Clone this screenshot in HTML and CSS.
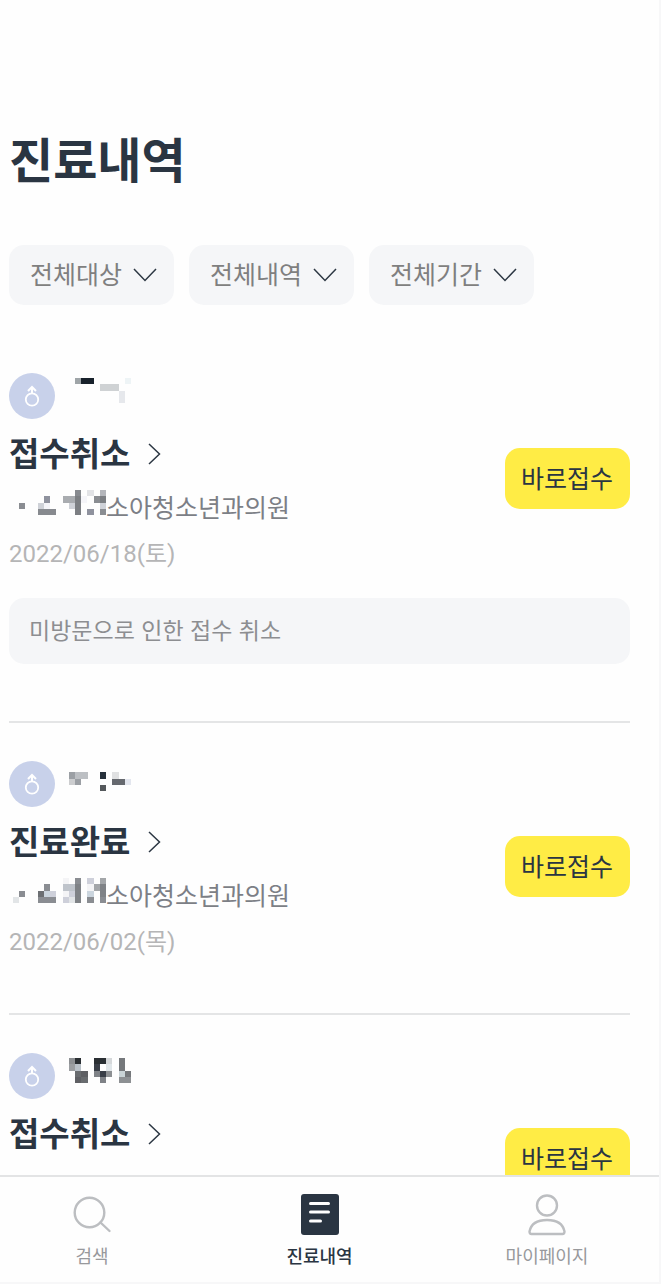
FILE: index.html
```html
<!DOCTYPE html>
<html lang="ko">
<head>
<meta charset="utf-8">
<meta name="viewport" content="width=device-width, initial-scale=1">
<title>진료내역</title>
<link rel="stylesheet" href="styles.css">
</head>
<body>
<svg class="symbols" aria-hidden="true">
  <symbol id="male" viewBox="0 0 46 46">
    <circle cx="23" cy="26.500" r="6.200" fill="none" stroke="#fff" stroke-width="1.8"/>
    <path d="M23 20.500V15M19 18L23 14l4 4" fill="none" stroke="#fff" stroke-width="2"/>
  </symbol>
  <symbol id="down" viewBox="0 0 24 14">
    <path d="M1 1l11 11.5L23 1" fill="none" stroke="#2c3743" stroke-width="1.5"/>
  </symbol>
  <symbol id="next" viewBox="0 0 13 22">
    <path d="M1 1l10.5 10L1 21" fill="none" stroke="#2c3743" stroke-width="1.5"/>
  </symbol>
</svg>
<div class="app">
  <main class="content">
    <h1 class="title">진료내역</h1>
    <div class="filters">
      <button class="chip" type="button">전체대상<svg class="chip-icon"><use href="#down"/></svg></button>
      <button class="chip" type="button">전체내역<svg class="chip-icon"><use href="#down"/></svg></button>
      <button class="chip" type="button">전체기간<svg class="chip-icon"><use href="#down"/></svg></button>
    </div>

    <article class="visit">
      <div class="visit-row">
        <div class="info">
          <div class="person">
            <svg class="avatar"><use href="#male"/></svg>
            <svg class="mask-name" viewBox="0 0 10 4" preserveAspectRatio="none" shape-rendering="crispEdges">
              <path fill="#9fa5a8" d="M1 0h1v1h-1z"/><path fill="#18212b" d="M2 0h2v1h-2z"/><path fill="#eef4f6" d="M9 0h1v1h-1z"/>
              <path fill="#cfd2d4" d="M5 1h3v1h-3z"/><path fill="#e6e8ec" d="M8 2h1v2h-1z"/>
            </svg>
          </div>
          <h2 class="status"><a class="status-link" href="#visit-1">접수취소<svg class="next-icon"><use href="#next"/></svg></a></h2>
          <p class="clinic">
            <svg class="mask-clinic" viewBox="0 0 15 4" preserveAspectRatio="none" shape-rendering="crispEdges">
              <path fill="#878a8f" d="M10 0h1v1h-1zM4 3h3v1h-3z"/><path fill="#e2e3e6" d="M12 0h1v1h-1z"/><path fill="#b4b6bb" d="M14 0h1v1h-1z"/>
              <path fill="#8f929e" d="M5 1h1v1h-1zM12 3h1v1h-1z"/><path fill="#a9acb0" d="M8 1h2v1h-2z"/><path fill="#7c7f83" d="M10 1h1v3h-1zM14 1h1v1h-1z"/>
              <path fill="#f5f5f9" d="M11 1h1v1h-1zM5 2h1v1h-1z"/><path fill="#8a8d92" d="M13 1h1v1h-1zM1 2h1v1h-1zM14 3h1v1h-1z"/><path fill="#cfd2d8" d="M4 2h1v1h-1zM9 2h1v1h-1zM14 2h1v1h-1z"/>
            </svg>소아청소년과의원</p>
          <p class="date"><time datetime="2022-06-18">2022/06/18(토)</time></p>
        </div>
        <button class="book" type="button">바로접수</button>
      </div>
      <p class="note">미방문으로 인한 접수 취소</p>
    </article>

    <article class="visit">
      <div class="visit-row">
        <div class="info">
          <div class="person">
            <svg class="avatar"><use href="#male"/></svg>
            <svg class="mask-name" viewBox="0 0 10 4" preserveAspectRatio="none" shape-rendering="crispEdges">
              <path fill="#9b9fa4" d="M0 1h1v1h-1zM1 2h1v1h-1z"/><path fill="#bcbfc3" d="M1 1h2v1h-2z"/><path fill="#26303b" d="M5 1h1v1h-1z"/><path fill="#e0e1e2" d="M7 1h1v1h-1z"/>
              <path fill="#cccdcf" d="M0 2h1v1h-1z"/><path fill="#66696f" d="M7 2h2v1h-2z"/><path fill="#e3e6ee" d="M9 2h1v1h-1z"/><path fill="#54585c" d="M5 3h1v1h-1z"/>
            </svg>
          </div>
          <h2 class="status"><a class="status-link" href="#visit-2">진료완료<svg class="next-icon"><use href="#next"/></svg></a></h2>
          <p class="clinic">
            <svg class="mask-clinic" viewBox="0 0 15 4" preserveAspectRatio="none" shape-rendering="crispEdges">
              <path fill="#8a8d92" d="M10 0h1v1h-1zM5 1h1v1h-1zM1 2h1v1h-1zM4 3h3v1h-3zM12 3h1v1h-1zM14 3h1v1h-1z"/><path fill="#ced0da" d="M12 0h1v1h-1zM6 2h1v1h-1zM9 2h1v1h-1zM8 3h1v1h-1z"/>
              <path fill="#a3a6a9" d="M14 0h1v1h-1zM13 1h1v1h-1z"/><path fill="#bfc4cb" d="M8 1h2v1h-2z"/><path fill="#7f8286" d="M10 1h1v3h-1zM14 1h1v2h-1z"/><path fill="#6c6f73" d="M4 2h1v1h-1z"/>
              <path fill="#cbd5de" d="M5 2h1v1h-1zM12 2h1v1h-1z"/><path fill="#e2e5e7" d="M0 3h1v1h-1zM9 3h1v1h-1z"/><path fill="#f4f4f6" d="M8 0h1v1h-1zM12 1h1v1h-1zM8 2h1v1h-1z"/>
            </svg>소아청소년과의원</p>
          <p class="date"><time datetime="2022-06-02">2022/06/02(목)</time></p>
        </div>
        <button class="book" type="button">바로접수</button>
      </div>
    </article>

    <article class="visit">
      <div class="visit-row">
        <div class="info">
          <div class="person">
            <svg class="avatar"><use href="#male"/></svg>
            <svg class="mask-name" viewBox="0 0 10 4" preserveAspectRatio="none" shape-rendering="crispEdges">
              <path fill="#8d9093" d="M0 0h1v1h-1zM6 2h1v1h-1zM8 3h2v1h-2z"/><path fill="#2a2f33" d="M1 0h1v1h-1zM4 0h2v1h-2z"/><path fill="#d5d8da" d="M6 0h1v1h-1z"/><path fill="#75787b" d="M8 0h1v2h-1zM9 2h1v1h-1z"/>
              <path fill="#9b9ea1" d="M0 1h1v1h-1z"/><path fill="#b9c1c8" d="M1 1h1v1h-1z"/><path fill="#393e47" d="M4 1h1v1h-1zM5 2h1v1h-1z"/><path fill="#e0e6e9" d="M6 1h1v1h-1z"/>
              <path fill="#696c6f" d="M1 2h1v1h-1zM2 3h1v1h-1z"/><path fill="#5f6064" d="M2 2h1v1h-1zM1 3h1v1h-1z"/><path fill="#7f8287" d="M4 2h1v1h-1zM5 3h1v1h-1z"/><path fill="#c9d3d6" d="M8 2h1v1h-1z"/>
            </svg>
          </div>
          <h2 class="status"><a class="status-link" href="#visit-3">접수취소<svg class="next-icon"><use href="#next"/></svg></a></h2>
        </div>
        <button class="book" type="button">바로접수</button>
      </div>
    </article>
  </main>

  <nav class="tabs">
    <a class="tab" href="#search">
      <svg class="tab-icon" viewBox="0 0 42 42" fill="none" stroke="#bcbec1" stroke-width="2.4" stroke-linecap="round"><circle cx="18.500" cy="18.500" r="14.800"/><path d="M29.500 28.500l9 8.500"/></svg>
      검색
    </a>
    <a class="tab tab-current" href="#history" aria-current="page">
      <svg class="tab-icon" viewBox="0 0 42 42"><rect x="2" y="0" width="38" height="41" rx="3" fill="#2a3542"/><path d="M11.500 9.500h18M11.500 18h18M11.500 27h10" stroke="#fff" stroke-width="3" stroke-linecap="round"/></svg>
      진료내역
    </a>
    <a class="tab" href="#mypage">
      <svg class="tab-icon" viewBox="0 0 42 42" fill="none" stroke="#bcbec1" stroke-width="2.4" stroke-linejoin="round"><circle cx="21" cy="11.500" r="10"/><path d="M5.500 40H36.500Q38.500 40 38.500 37.500C37 30 30.500 26 21 26S5 30 3.500 37.500Q3.500 40 5.500 40z"/></svg>
      마이페이지
    </a>
  </nav>
</div>
</body>
</html>
```
FILE: styles.css
```css
* {
  box-sizing: border-box;
}

body {
  margin: 0;
  background: #f7f7f8;
  color: #2a3542;
  font-family: "Noto Sans CJK KR", sans-serif;
}

h1,
h2,
p {
  margin: 0;
}

a {
  color: inherit;
  text-decoration: none;
}

button {
  border: 0;
  font-family: inherit;
  font-weight: 400;
}

.symbols {
  display: none;
}

.app {
  display: flex;
  flex-direction: column;
  height: 100vh;
  padding: 0 2px 2px 0;
}

.content {
  flex: 1;
  min-height: 0;
  overflow: hidden;
  padding: 121px 29px 0 9px;
  background: #fefefe;
}

.title {
  font-size: 48px;
  line-height: 72px;
  font-weight: 700;
}

.filters {
  display: flex;
  gap: 15px;
  margin: 52px 0 30px;
}

.chip {
  display: flex;
  align-items: center;
  gap: 11px;
  height: 60px;
  padding: 0 17px 4px 21px;
  border-radius: 15px;
  background: #f5f6f8;
  color: #7f7f80;
  font-size: 25px;
}

.chip-icon {
  width: 24px;
  height: 14px;
  margin-top: 4px;
}

.visit {
  padding: 38px 0 53px;
}

.visit:first-of-type {
  padding-bottom: 57px;
}

.visit + .visit {
  border-top: 2px solid #e4e5e6;
}

.visit-row {
  display: flex;
  justify-content: space-between;
  align-items: flex-start;
}

.person {
  display: flex;
  gap: 14px;
}

.avatar {
  width: 46px;
  height: 46px;
  border-radius: 50%;
  background: #c8d1ea;
}

.mask-name {
  width: 62px;
  height: 25px;
  margin-top: 5px;
}

.status {
  margin-top: 9px;
  font-size: 33px;
  line-height: 48px;
  font-weight: 700;
}

.status-link {
  display: flex;
  align-items: center;
  gap: 18px;
}

.next-icon {
  width: 13px;
  height: 22px;
  margin-top: 4px;
}

.clinic {
  display: flex;
  margin-top: 12px;
  padding-left: 4px;
  color: #7c7f86;
  font-size: 25px;
  line-height: 36px;
}

.mask-clinic {
  width: 93px;
  height: 25px;
  margin-top: 2px;
}

.date {
  margin-top: 12px;
  color: #b5b5b6;
  font-family: Roboto, "Noto Sans CJK KR", sans-serif;
  font-size: 24px;
  line-height: 36px;
}

.book {
  height: 61px;
  margin-top: 75px;
  padding: 0 17px 4px 16px;
  border-radius: 15px;
  background: #ffec45;
  color: #2a3542;
  font-size: 25px;
}

.note {
  margin-top: 26px;
  padding: 13px 20px 17px;
  border-radius: 15px;
  background: #f5f6f8;
  color: #8d8e91;
  font-size: 23px;
  line-height: 36px;
}

.tabs {
  display: flex;
  justify-content: space-between;
  height: 107px;
  padding: 17px 70px 0 50px;
  border-top: 2px solid #e3e4e5;
  background: #fefefe;
}

.tab {
  display: flex;
  flex-direction: column;
  align-items: center;
  gap: 6px;
  width: 84px;
  color: #98999c;
  font-size: 18px;
  line-height: 27px;
  white-space: nowrap;
}

.tab-current {
  color: #2a3542;
  font-weight: 500;
}

.tab-icon {
  width: 42px;
  height: 42px;
}
```
